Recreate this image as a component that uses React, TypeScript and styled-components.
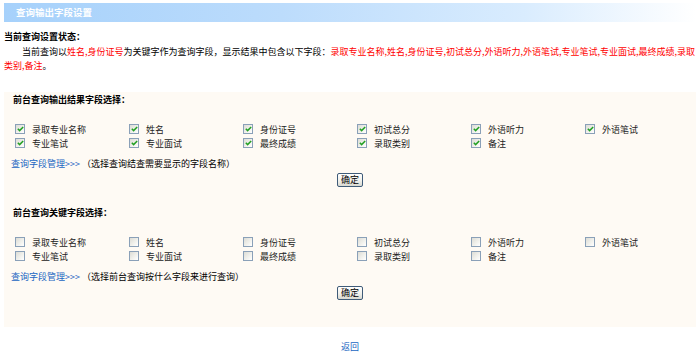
import React from 'react';
import styled, { createGlobalStyle } from 'styled-components';

const Global = createGlobalStyle`
  html, body { margin: 0; padding: 0; background: #fff; }
  body {
    font-family: "Noto Sans CJK SC", "Liberation Sans", sans-serif;
    font-size: 9px;
    color: #000;
  }
`;

const Page = styled.div`
  padding: 3px 4px 0 4px;
`;

const TitleBar = styled.div`
  height: 19px;
  line-height: 19px;
  padding-left: 12px;
  color: #fff;
  font-size: 9.5px;
  font-weight: bold;
  background: linear-gradient(to right, #a6d1fb 0%, #bcdcfc 40%, #d9ecfe 75%, #ffffff 100%);
`;

const StatusTitle = styled.div`
  margin-top: 8px;
  line-height: 14px;
  font-weight: bold;
`;

const StatusText = styled.p`
  margin: 1px 0 0 0;
  line-height: 14px;
  text-indent: 18px;
`;

const Red = styled.span`
  color: #f00;
`;

const Panel = styled.div`
  margin-top: 19px;
  background: #fefaf4;
  padding: 1px 0 27px 0;
`;

const Section = styled.div<{ $gap?: number }>`
  margin-top: ${p => p.$gap ?? 0}px;
`;

const SectionTitle = styled.div`
  padding-left: 9px;
  line-height: 14px;
  font-weight: bold;
`;

const Grid = styled.div`
  margin-top: 15px;
  padding-left: 8px;
  display: grid;
  grid-template-columns: repeat(6, 114px);
  row-gap: 0;
`;

const Item = styled.label`
  display: flex;
  align-items: center;
  height: 14px;
  color: #222;
`;

const Box = styled.span<{ $checked: boolean }>`
  box-sizing: border-box;
  width: 10px;
  height: 10px;
  margin-left: 3px;
  margin-right: 7px;
  border: 1px solid #8aa0b8;
  background: linear-gradient(135deg, #dcdcd5 0%, #f2f2ee 60%, #ffffff 100%);
  display: inline-flex;
  align-items: center;
  justify-content: center;
`;

const Manage = styled.div`
  margin-top: 7px;
  padding-left: 7px;
  line-height: 14px;
`;

const Link = styled.a`
  color: #1a66c2;
  text-decoration: none;
`;

const Gt = styled.span`
  color: #1a66c2;
  margin-right: 2px;
`;

const ButtonRow = styled.div`
  margin-top: 2px;
  display: flex;
  justify-content: center;
`;

const Button = styled.button`
  box-sizing: border-box;
  width: 26px;
  height: 14px;
  padding: 0;
  font-family: inherit;
  font-size: 9px;
  line-height: 12px;
  color: #000;
  border: 1px solid #3f5b78;
  border-radius: 2px;
  background: linear-gradient(to bottom, #ffffff 0%, #f1f1ec 55%, #d8d8d0 100%);
`;

const Footer = styled.div`
  margin-top: 13px;
  text-align: center;
  line-height: 14px;
`;

const fields = [
  '录取专业名称', '姓名', '身份证号', '初试总分', '外语听力', '外语笔试',
  '专业笔试', '专业面试', '最终成绩', '录取类别', '备注',
];

const Check = ({ checked }: { checked: boolean }) => (
  <Box $checked={checked}>
    {checked && (
      <svg width="7" height="6" viewBox="0 0 7 6">
        <path d="M0.8 2.8 L2.6 4.6 L6.2 0.9" fill="none" stroke="#23a023" strokeWidth="1.5" />
      </svg>
    )}
  </Box>
);

const FieldSection = ({ title, checked, hint, gap }: { title: string; checked: boolean; hint: string; gap?: number }) => (
  <Section $gap={gap}>
    <SectionTitle>{title}</SectionTitle>
    <Grid>
      {fields.map(f => (
        <Item key={f}>
          <Check checked={checked} />
          {f}
        </Item>
      ))}
    </Grid>
    <Manage>
      <Link href="#">查询字段管理</Link>
      <Gt>&gt;&gt;&gt;</Gt>
      {hint}
    </Manage>
    <ButtonRow>
      <Button type="button">确定</Button>
    </ButtonRow>
  </Section>
);

export default function App() {
  return (
    <Page>
      <Global />
      <TitleBar>查询输出字段设置</TitleBar>
      <StatusTitle>当前查询设置状态：</StatusTitle>
      <StatusText>
        当前查询以<Red>姓名,身份证号</Red>为关键字作为查询字段，显示结果中包含以下字段：
        <Red>录取专业名称,姓名,身份证号,初试总分,外语听力,外语笔试,专业笔试,专业面试,最终成绩,录取类别,备注</Red>。
      </StatusText>
      <Panel>
        <FieldSection title="前台查询输出结果字段选择：" checked hint="（选择查询结查需要显示的字段名称）" />
        <FieldSection title="前台查询关键字段选择：" checked={false} hint="（选择前台查询按什么字段来进行查询）" gap={19} />
      </Panel>
      <Footer>
        <Link href="#">返回</Link>
      </Footer>
    </Page>
  );
}
